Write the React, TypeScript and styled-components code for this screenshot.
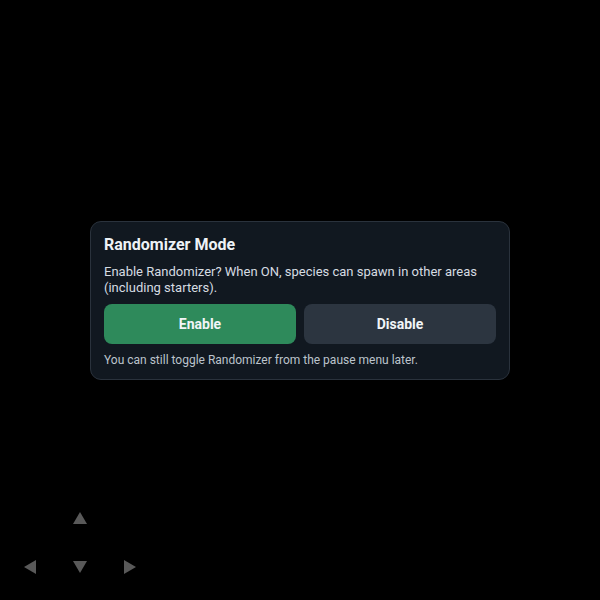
import React from "react";
import styled, { createGlobalStyle } from "styled-components";

const GlobalStyle = createGlobalStyle`
  html, body {
    margin: 0;
    padding: 0;
    background: #000;
  }
  body {
    font-family: Roboto, "Noto Sans", "Liberation Sans", sans-serif;
  }
  * { box-sizing: border-box; }
`;

const Screen = styled.div`
  position: relative;
  width: 600px;
  height: 600px;
  background: #000;
  display: flex;
  align-items: center;
  justify-content: center;
  overflow: hidden;
`;

const Card = styled.div`
  width: 420px;
  background: #111820;
  border: 1px solid #2a323c;
  border-radius: 11px;
  padding: 13px 13px 11px 13px;
  display: flex;
  flex-direction: column;
`;

const Title = styled.h2`
  margin: 0 0 9px 0;
  font-size: 16px;
  line-height: 20px;
  font-weight: 700;
  color: #eef2f6;
`;

const Body = styled.p`
  margin: 0 0 8px 0;
  font-size: 13px;
  line-height: 16px;
  color: #d6dce2;
`;

const ButtonRow = styled.div`
  display: grid;
  grid-template-columns: 1fr 1fr;
  gap: 8px;
  margin-bottom: 8px;
`;

const Button = styled.button<{ $variant: "primary" | "secondary" }>`
  height: 40px;
  border: none;
  border-radius: 8px;
  font-family: inherit;
  font-size: 14px;
  font-weight: 700;
  color: #f2f5f8;
  background: ${(p) => (p.$variant === "primary" ? "#2e8a5b" : "#2c3540")};
  cursor: pointer;
`;

const Footer = styled.p`
  margin: 0;
  font-size: 12px;
  line-height: 16px;
  color: #bcc4cc;
`;

const DPad = styled.div`
  position: absolute;
  left: 5px;
  top: 493px;
  display: grid;
  grid-template-columns: repeat(3, 50px);
  grid-template-rows: 49px 49px;
`;

const PadCell = styled.div`
  display: flex;
  align-items: center;
  justify-content: center;
`;

type Dir = "up" | "down" | "left" | "right";

const Arrow = ({ dir }: { dir: Dir }) => {
  const pts: Record<Dir, string> = {
    up: "7,0 14,12 0,12",
    down: "0,0 14,0 7,12",
    left: "12,0 12,14 0,7",
    right: "0,0 12,7 0,14",
  };
  const vertical = dir === "up" || dir === "down";
  const w = vertical ? 14 : 12;
  const h = vertical ? 12 : 14;
  return (
    <svg width={w} height={h} viewBox={`0 0 ${w} ${h}`}>
      <polygon points={pts[dir]} fill="#595959" />
    </svg>
  );
};

export default function App() {
  return (
    <>
      <GlobalStyle />
      <Screen>
        <Card>
          <Title>Randomizer Mode</Title>
          <Body>
            Enable Randomizer? When ON, species can spawn in other areas (including starters).
          </Body>
          <ButtonRow>
            <Button $variant="primary">Enable</Button>
            <Button $variant="secondary">Disable</Button>
          </ButtonRow>
          <Footer>You can still toggle Randomizer from the pause menu later.</Footer>
        </Card>
        <DPad>
          <PadCell />
          <PadCell>
            <Arrow dir="up" />
          </PadCell>
          <PadCell />
          <PadCell>
            <Arrow dir="left" />
          </PadCell>
          <PadCell>
            <Arrow dir="down" />
          </PadCell>
          <PadCell>
            <Arrow dir="right" />
          </PadCell>
        </DPad>
      </Screen>
    </>
  );
}
